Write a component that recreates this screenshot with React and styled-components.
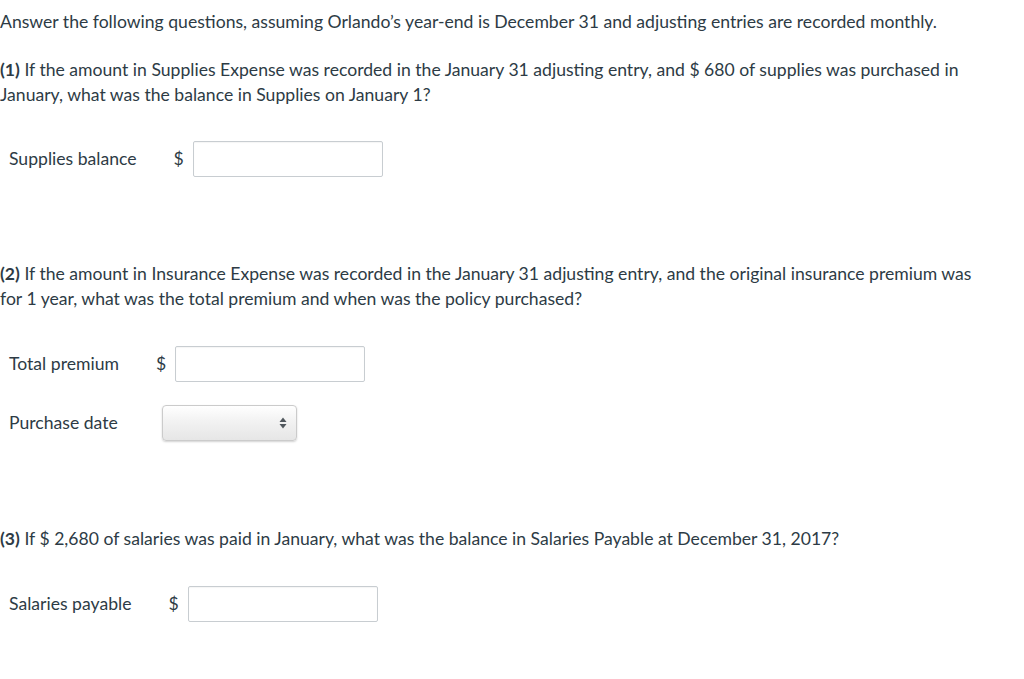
import React from 'react';
import styled, { createGlobalStyle } from 'styled-components';

const GlobalStyle = createGlobalStyle`
  html, body {
    margin: 0;
    padding: 0;
    background: #ffffff;
  }
  body {
    font-family: Lato, 'Open Sans', 'Liberation Sans', sans-serif;
    font-size: 17.6px;
    color: #2d3b45;
  }
`;

const questions = [
  {
    id: 1,
    gap: 0,
    answerGap: 34,
    text: 'If the amount in Supplies Expense was recorded in the January 31 adjusting entry, and $ 680 of supplies was purchased in January, what was the balance in Supplies on January 1?',
    rows: [{ label: 'Supplies balance', type: 'money' }],
  },
  {
    id: 2,
    gap: 84,
    answerGap: 35,
    text: 'If the amount in Insurance Expense was recorded in the January 31 adjusting entry, and the original insurance premium was for 1 year, what was the total premium and when was the policy purchased?',
    rows: [
      { label: 'Total premium', type: 'money' },
      { label: 'Purchase date', type: 'select' },
    ],
  },
  {
    id: 3,
    gap: 85,
    answerGap: 35,
    text: 'If $ 2,680 of salaries was paid in January, what was the balance in Salaries Payable at December 31, 2017?',
    rows: [{ label: 'Salaries payable', type: 'money' }],
  },
];

const ArrowIcon = () => (
  <svg width="8" height="12" viewBox="0 0 8 12">
    <path d="M4 0.5 L7.5 5 L0.5 5 Z" fill="#50575d" />
    <path d="M4 11.5 L7.5 7 L0.5 7 Z" fill="#50575d" />
  </svg>
);

const App = () => {
  return (
    <Page>
      <GlobalStyle />
      <Intro>
        Answer the following questions, assuming Orlando’s year-end is December 31 and adjusting entries are recorded
        monthly.
      </Intro>
      {questions.map((q) => (
        <Section key={q.id} $gap={q.gap}>
          <Question>
            <strong>({q.id})</strong> {q.text}
          </Question>
          <AnswerGrid $gap={q.answerGap}>
            {q.rows.map((row) => (
              <React.Fragment key={row.label}>
                <Label>{row.label}</Label>
                {row.type === 'money' ? (
                  <>
                    <Dollar>$</Dollar>
                    <AmountInput type="text" />
                  </>
                ) : (
                  <SelectWrap>
                    <Select defaultValue="">
                      <option value="" />
                    </Select>
                    <SelectArrow>
                      <ArrowIcon />
                    </SelectArrow>
                  </SelectWrap>
                )}
              </React.Fragment>
            ))}
          </AnswerGrid>
        </Section>
      ))}
    </Page>
  );
};

export default App;

const Page = styled.div`
  padding: 9px 0 40px 0;
  width: 1024px;
  box-sizing: border-box;
`;

const Intro = styled.p`
  margin: 0 0 23px 0;
  line-height: 25px;
`;

const Section = styled.section`
  margin-top: ${(props) => props.$gap}px;
`;

const Question = styled.p`
  margin: 0;
  line-height: 25px;
  padding-right: 34px;

  strong {
    font-weight: 700;
  }
`;

const AnswerGrid = styled.div`
  display: grid;
  grid-template-columns: auto auto auto;
  justify-content: start;
  align-items: center;
  row-gap: 23px;
  margin-top: ${(props) => props.$gap}px;
`;

const Label = styled.span`
  grid-column: 1;
  padding: 0 31px 0 9px;
  line-height: 36px;
  white-space: nowrap;
`;

const Dollar = styled.span`
  grid-column: 2;
  padding-left: 6px;
  line-height: 36px;
`;

const AmountInput = styled.input`
  grid-column: 3;
  margin: 0 0 0 9px;
  width: 190px;
  height: 36px;
  box-sizing: border-box;
  border: 1px solid #c8cdd1;
  border-radius: 2px;
  background: #ffffff;
  box-shadow: inset 0 1px 1px rgba(0, 0, 0, 0.04);
  padding: 4px 8px;
  font-family: Lato, sans-serif;
  font-size: 16px;
  color: #2d3b45;
  outline: none;
`;

const SelectWrap = styled.div`
  grid-column: 2 / 4;
  position: relative;
  margin-left: 12px;
  width: 135px;
  height: 36px;
`;

const Select = styled.select`
  appearance: none;
  -webkit-appearance: none;
  width: 135px;
  height: 36px;
  box-sizing: border-box;
  border: 1px solid #cbcbcb;
  border-radius: 4px;
  background: linear-gradient(to bottom, #ffffff 0%, #f2f2f2 45%, #e6e6e6 100%);
  box-shadow: 0 1px 2px rgba(0, 0, 0, 0.18);
  font-family: Lato, sans-serif;
  font-size: 16px;
  color: #2d3b45;
  padding: 0 24px 0 8px;
  outline: none;
`;

const SelectArrow = styled.span`
  position: absolute;
  right: 10px;
  top: 12px;
  display: flex;
  pointer-events: none;
`;
